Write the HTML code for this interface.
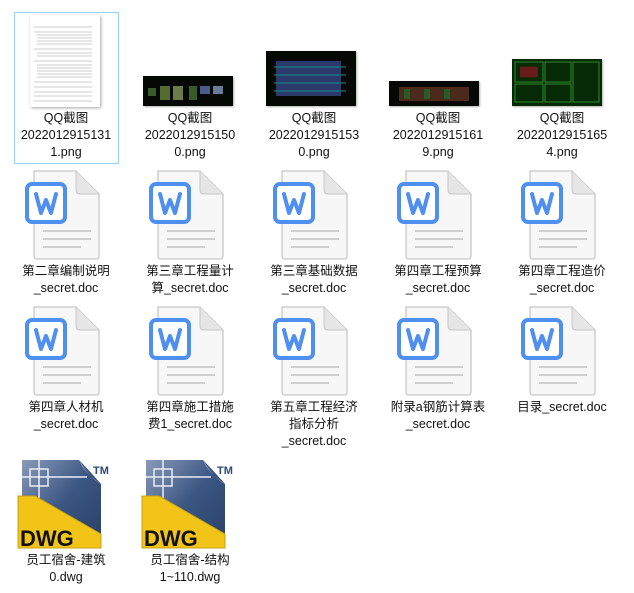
<!DOCTYPE html>
<html><head><meta charset="utf-8"><style>
body{margin:0;width:634px;height:593px;background:#fff;position:relative;overflow:hidden;font-family:"Liberation Sans","Noto Sans CJK SC",sans-serif;}
.t{position:absolute;width:120px;text-align:center;font-size:12.5px;line-height:17px;color:#111;}
.a{position:absolute;}
.sel{position:absolute;left:14px;top:12px;width:103px;height:150px;border:1px solid #99d1ff;background:#fff;}
.blk{position:absolute;background:#050805;box-shadow:1px 1px 2px rgba(0,0,0,.3);}
</style></head><body>
<div class="sel"></div>
<div class="a" style="left:30px;top:15px;width:70px;height:92px;background:#fff;box-shadow:1px 1px 3px rgba(0,0,0,.35);">
<svg width="70" height="92"><g stroke="#999" stroke-width="0.6">
<line x1="4" y1="12" x2="62" y2="12"/><line x1="4" y1="17" x2="62" y2="17"/><line x1="7" y1="20" x2="62" y2="20"/><line x1="7" y1="23" x2="62" y2="23"/><line x1="7" y1="26" x2="62" y2="26"/><line x1="7" y1="29" x2="62" y2="29"/><line x1="4" y1="34" x2="62" y2="34"/><line x1="7" y1="38" x2="62" y2="38"/><line x1="7" y1="41" x2="62" y2="41"/><line x1="4" y1="46" x2="62" y2="46"/><line x1="7" y1="50" x2="62" y2="50"/><line x1="7" y1="53" x2="62" y2="53"/><line x1="7" y1="56" x2="62" y2="56"/><line x1="7" y1="59" x2="62" y2="59"/><line x1="7" y1="62" x2="62" y2="62"/><line x1="4" y1="67" x2="62" y2="67"/><line x1="4" y1="72" x2="62" y2="72"/><line x1="4" y1="77" x2="62" y2="77"/><line x1="4" y1="81" x2="62" y2="81"/><line x1="4" y1="86" x2="62" y2="86"/></g></svg></div>
<div class="blk" style="left:143px;top:76px;width:90px;height:30px;"><svg width="90" height="30"><g fill="#3a5a2a"><rect x="5" y="12" width="8" height="8"/><rect x="17" y="10" width="10" height="14" fill="#556b2f"/><rect x="30" y="10" width="10" height="14" fill="#6b7b4a"/><rect x="46" y="10" width="8" height="14"/><rect x="57" y="10" width="10" height="8" fill="#4a5a8a"/><rect x="70" y="10" width="10" height="8" fill="#6a7a9a"/></g></svg></div>
<div class="blk" style="left:266px;top:51px;width:90px;height:55px;"><svg width="90" height="55"><g fill="#2a3a6a"><rect x="10" y="10" width="65" height="35"/></g><g stroke="#1a8a8a" stroke-width="1"><line x1="8" y1="16" x2="80" y2="16"/><line x1="8" y1="24" x2="80" y2="24"/><line x1="8" y1="32" x2="80" y2="32"/><line x1="8" y1="40" x2="80" y2="40"/></g></svg></div>
<div class="blk" style="left:389px;top:81px;width:90px;height:25px;"><svg width="90" height="25"><g fill="#4a2a1a"><rect x="10" y="6" width="70" height="14"/></g><g fill="#2a5a2a"><rect x="15" y="8" width="6" height="10"/><rect x="35" y="8" width="6" height="10"/><rect x="55" y="8" width="6" height="10"/></g></svg></div>
<div class="blk" style="left:512px;top:59px;width:90px;height:47px;background:#062a06;"><svg width="90" height="47"><g stroke="#2c8a2c" fill="none" stroke-width="1"><rect x="3" y="3" width="28" height="20"/><rect x="33" y="3" width="26" height="20"/><rect x="61" y="3" width="26" height="40"/><rect x="3" y="25" width="28" height="18"/><rect x="33" y="25" width="26" height="18"/></g><g fill="#6a1a1a"><rect x="8" y="8" width="18" height="10"/></g></svg></div>
<div class="t" style="left:6px;top:110px;">QQ截图<br>2022012915131<br>1.png</div>
<div class="t" style="left:130px;top:110px;">QQ截图<br>2022012915150<br>0.png</div>
<div class="t" style="left:254px;top:110px;">QQ截图<br>2022012915153<br>0.png</div>
<div class="t" style="left:378px;top:110px;">QQ截图<br>2022012915161<br>9.png</div>
<div class="t" style="left:502px;top:110px;">QQ截图<br>2022012915165<br>4.png</div>

<svg width="0" height="0" style="position:absolute"><defs><g id="w">
<path d="M9 1 H51 L74 24 V86 Q74 89 71 89 H12 Q9 89 9 86 Z" fill="#f7f7f7" stroke="#b9b9b9" stroke-width="1"/>
<path d="M51 1 V20 Q51 24 55 24 H74" fill="#e6e6e6" stroke="#c6c6c6" stroke-width="1"/>
<line x1="18" y1="61" x2="66" y2="61" stroke="#cfcfcf" stroke-width="2"/><line x1="18" y1="69" x2="66" y2="69" stroke="#cfcfcf" stroke-width="2"/><line x1="18" y1="77" x2="56" y2="77" stroke="#cfcfcf" stroke-width="2"/>
<rect x="2" y="14" width="38" height="38" rx="5" fill="#fff" stroke="#4f8ff0" stroke-width="4"/>
<path d="M11 24 L16 43 L21 30 L26 43 L31 24" fill="none" stroke="#4f8ff0" stroke-width="4" stroke-linejoin="round" stroke-linecap="round"/>
</g></defs></svg>
<svg class="a" style="left:25px;top:170px" width="78" height="92"><use href="#w"/></svg>
<svg class="a" style="left:149px;top:170px" width="78" height="92"><use href="#w"/></svg>
<svg class="a" style="left:273px;top:170px" width="78" height="92"><use href="#w"/></svg>
<svg class="a" style="left:397px;top:170px" width="78" height="92"><use href="#w"/></svg>
<svg class="a" style="left:521px;top:170px" width="78" height="92"><use href="#w"/></svg>
<svg class="a" style="left:25px;top:306px" width="78" height="92"><use href="#w"/></svg>
<svg class="a" style="left:149px;top:306px" width="78" height="92"><use href="#w"/></svg>
<svg class="a" style="left:273px;top:306px" width="78" height="92"><use href="#w"/></svg>
<svg class="a" style="left:397px;top:306px" width="78" height="92"><use href="#w"/></svg>
<svg class="a" style="left:521px;top:306px" width="78" height="92"><use href="#w"/></svg>
<div class="t" style="left:6px;top:263px;">第二章编制说明<br>_secret.doc</div>
<div class="t" style="left:130px;top:263px;">第三章工程量计<br>算_secret.doc</div>
<div class="t" style="left:254px;top:263px;">第三章基础数据<br>_secret.doc</div>
<div class="t" style="left:378px;top:263px;">第四章工程预算<br>_secret.doc</div>
<div class="t" style="left:502px;top:263px;">第四章工程造价<br>_secret.doc</div>
<div class="t" style="left:6px;top:399px;">第四章人材机<br>_secret.doc</div>
<div class="t" style="left:130px;top:399px;">第四章施工措施<br>费1_secret.doc</div>
<div class="t" style="left:254px;top:399px;">第五章工程经济<br>指标分析<br>_secret.doc</div>
<div class="t" style="left:378px;top:399px;">附录a钢筋计算表<br>_secret.doc</div>
<div class="t" style="left:502px;top:399px;">目录_secret.doc</div>

<svg width="0" height="0" style="position:absolute"><defs>
<linearGradient id="bg" x1="0" y1="0" x2="1" y2="1"><stop offset="0" stop-color="#8a9ab8"/><stop offset=".5" stop-color="#3a5682"/><stop offset="1" stop-color="#2a3f66"/></linearGradient>
<g id="d">
<path d="M5 2 H62 Q70 10 84 26 V90 H5 Z" fill="url(#bg)"/>
<path d="M62 2 Q68 16 84 26 Q72 20 62 2Z" fill="#c8d2e4"/>
<g stroke="#e8eef8" stroke-width="1.5" fill="none"><line x1="22" y1="2" x2="22" y2="40"/><line x1="5" y1="19" x2="70" y2="19"/><rect x="13" y="11" width="18" height="17"/></g>
<rect x="21" y="18" width="2" height="2" fill="#fff"/>
<path d="M1 38 L18 38 L84 76 L84 90 L1 90 Z" fill="#f2c418" stroke="#c8a010" stroke-width="1"/>
<text x="3" y="88" font-family="Liberation Sans,sans-serif" font-weight="bold" font-size="22" fill="#111">DWG</text>
<text x="76" y="16" font-family="Liberation Sans,sans-serif" font-weight="bold" font-size="11" fill="#2a4a7a">TM</text>
</g></defs></svg>
<svg class="a" style="left:17px;top:458px" width="100" height="94"><use href="#d"/></svg>
<svg class="a" style="left:141px;top:458px" width="100" height="94"><use href="#d"/></svg>
<div class="t" style="left:6px;top:552px;">员工宿舍-建筑<br>0.dwg</div>
<div class="t" style="left:130px;top:552px;">员工宿舍-结构<br>1~110.dwg</div>
</body></html>
